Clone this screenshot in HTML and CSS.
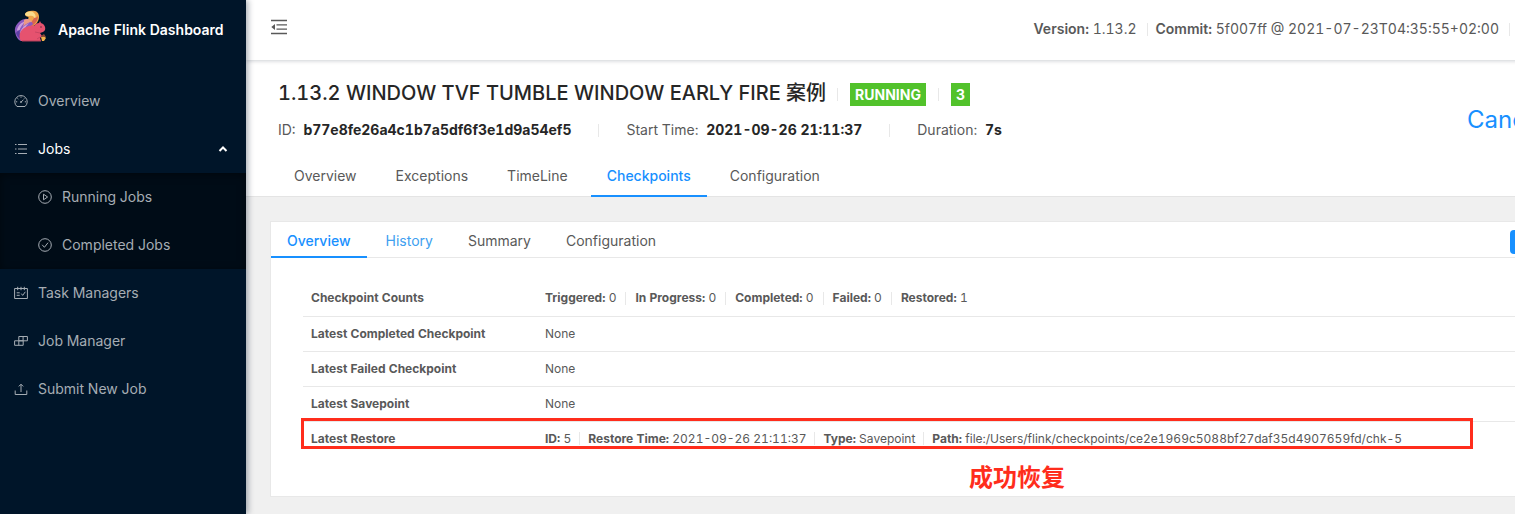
FILE: index.html
```html
<!DOCTYPE html>
<html lang="en">
<head>
<meta charset="utf-8">
<title>Apache Flink Dashboard</title>
<link rel="stylesheet" href="styles.css">
</head>
<body>
<div class="app">
  <aside class="sidebar">
    <a class="brand" href="#">
      <svg class="brand-logo" viewBox="0 0 32 32" aria-hidden="true">
        <path d="M11 4c1-3 6-4 10-3 4 1 5 6 3 10-1 3-4 4-6 6l-7-5c3-2 4-4 4-5-2 0-4-1-4-3z" fill="#f0a64a"/>
        <path d="M11 4c2-3 7-3 9-1s2 4 1 6c-1-3-3-4-6-3-2 0-4 0-4-2z" fill="#fbdc8c"/>
        <path d="M14 6c2 0 4 1 4 3l-5 3c2-2 2-4 1-6z" fill="#f0a64a"/>
        <path d="M20 8c2 0 3-1 4-2 0 4-2 7-6 10l-5-2c3-1 6-3 7-6z" fill="#d96550"/>
        <path d="M11 9C5 10 0 16 1 22c1 5 3 8 6 9l3-8 9-9c-2-3-5-6-8-5z" fill="#8b5ac0"/>
        <path d="M3 20c1-5 5-8 9-9-3 3-6 6-7 11zm3 5c0-5 3-9 9-12-4 4-6 8-6 13z" fill="#cda0dd"/>
        <path d="M10 10c3-2 7-1 8 2-3 0-7 2-9 5 1-3 1-5 1-7z" fill="#ed9a83"/>
        <path d="M2 23c1-1 2-3 4-3-1 4 1 8 3 10-4-1-6-4-7-7z" fill="#5d3fa5"/>
        <path d="M7 31c-3-5-1-10 3-13 4-2 7-3 10-2 1-2 3-3 5-3l1-2 1 2c3 1 5 4 4 7-1 2-3 2-5 3l2 3-2 2 1 3z" fill="#e6526f"/>
        <path d="M26 23l-5-1m5 5l-3 2" fill="none" stroke="#b43e5b" stroke-width=".6"/>
        <path d="M8 31h19" stroke="#b43e5b"/>
        <path d="M27 27l3-1 2 2-2 3-2 0z" fill="#f4b24b"/>
        <path d="M27 26l3-2 2 3-2 0z" fill="#8d4a38"/>
        <circle cx="27" cy="17" r=".7" fill="#4c243c"/>
      </svg>
      <span>Apache Flink Dashboard</span>
    </a>
    <nav class="menu">
      <a class="menu-item" href="#">
        <svg class="icon" viewBox="0 0 14 14"><path d="M3 12.5h8A6.2 6.2 0 1 0 3 12.5zM7 8.2l2.5-2.6M7 2.5v1.2M3.4 4.2l.9.8M2 7.8h1.2m7.6 0H12M10.6 4.2l-.5.5"/><circle cx="7" cy="8" r=".6"/></svg>
        Overview</a>
      <button class="menu-item menu-item-open" type="button" aria-expanded="true">
        <svg class="icon" viewBox="0 0 14 14"><path d="M4 2.5h9M4 7h9M4 11.5h9M1 2.5h1.5M1 7h1.5M1 11.5h1.5"/></svg>
        Jobs
        <svg class="caret" viewBox="0 0 10 10"><path d="M1.5 7L5 3.5 8.5 7"/></svg>
      </button>
      <div class="submenu">
        <a class="menu-item" href="#">
          <svg class="icon" viewBox="0 0 14 14"><circle cx="7" cy="7" r="6.3"/><path d="M5.5 4.2v5.6L9.6 7z"/></svg>
          Running Jobs</a>
        <a class="menu-item" href="#">
          <svg class="icon" viewBox="0 0 14 14"><circle cx="7" cy="7" r="6.3"/><path d="M4.2 6.8l2.2 2.5 3.6-4.6"/></svg>
          Completed Jobs</a>
      </div>
      <a class="menu-item" href="#">
        <svg class="icon" viewBox="0 0 14 14"><path d="M.6 2.5h12.8v10H.6zM3.7.8v3.4M7 .8v3.4M10.3.8v3.4M2.7 6.8h3M2.7 9.3h3M7.3 7.6l1.4 1.8 2.6-3.6"/></svg>
        Task Managers</a>
      <a class="menu-item" href="#">
        <svg class="icon" viewBox="0 0 14 14"><path d="M4.8 2.5h8.6v4.3H4.8zM.6 6.8h8.6v4.5H.6zM9.1 2.5v4.3M4.8 6.8v4.5"/></svg>
        Job Manager</a>
      <a class="menu-item" href="#">
        <svg class="icon" viewBox="0 0 14 14"><path d="M1.2 8.5v4h11.6v-4M7 10V2.5M4.8 4.4L7 2.2l2.2 2.2"/></svg>
        Submit New Job</a>
    </nav>
  </aside>

  <div class="page">
    <header class="topbar">
      <button class="fold" type="button" aria-label="Collapse menu">
        <svg viewBox="0 0 16 16"><path d="M0 1.5h16M5.5 5.8H16M5.5 10.2H16M0 14.5h16"/><path class="solid" d="M4 5v6L.3 8z"/></svg>
      </button>
      <div class="build">
        <span><strong>Version:</strong> 1.13.2</span><i class="rule"></i>
        <span><strong>Commit:</strong> 5f007ff @ 2021-07-23T04:35:55+02:00</span><i class="rule"></i>
      </div>
    </header>

    <section class="job">
      <div class="job-head">
        <div class="job-info">
          <div class="job-title">
            <h1>1.13.2 WINDOW TVF TUMBLE WINDOW EARLY FIRE 案例</h1>
            <i class="rule"></i><span class="badge">RUNNING</span><i class="rule"></i><span class="badge">3</span>
          </div>
          <div class="job-meta">
            <span>ID: <strong>b77e8fe26a4c1b7a5df6f3e1d9a54ef5</strong></span><i class="rule"></i>
            <span>Start Time: <strong>2021-09-26 21:11:37</strong></span><i class="rule"></i>
            <span>Duration: <strong>7s</strong></span>
          </div>
        </div>
        <a class="cancel" href="#">Cancel Job</a>
      </div>
      <nav class="tabs">
        <a href="#">Overview</a>
        <a href="#">Exceptions</a>
        <a href="#">TimeLine</a>
        <a class="active" href="#">Checkpoints</a>
        <a href="#">Configuration</a>
      </nav>
    </section>

    <main class="card">
      <div class="card-bar">
        <nav class="tabs tabs-small">
          <a class="active" href="#">Overview</a>
          <a class="hover" href="#">History</a>
          <a href="#">Summary</a>
          <a href="#">Configuration</a>
        </nav>
        <button class="refresh" type="button" aria-label="Refresh"></button>
      </div>
      <div class="card-body">
        <table class="facts">
          <tr><th scope="row">Checkpoint Counts</th><td><div class="values counts">
            <span><strong>Triggered:</strong> 0</span><i class="rule"></i>
            <span><strong>In Progress:</strong> 0</span><i class="rule"></i>
            <span><strong>Completed:</strong> 0</span><i class="rule"></i>
            <span><strong>Failed:</strong> 0</span><i class="rule"></i>
            <span><strong>Restored:</strong> 1</span></div></td></tr>
          <tr><th scope="row">Latest Completed Checkpoint</th><td>None</td></tr>
          <tr><th scope="row">Latest Failed Checkpoint</th><td>None</td></tr>
          <tr><th scope="row">Latest Savepoint</th><td>None</td></tr>
          <tr><th scope="row">Latest Restore</th><td><div class="values">
            <span><strong>ID:</strong> 5</span><i class="rule"></i>
            <span><strong>Restore Time:</strong> 2021-09-26 21:11:37</span><i class="rule"></i>
            <span><strong>Type:</strong> Savepoint</span><i class="rule"></i>
            <span><strong>Path:</strong> file:/Users/flink/checkpoints/ce2e1969c5088bf27daf35d4907659fd/chk-5</span></div></td></tr>
        </table>
        <div class="mark-box"></div>
        <div class="mark-note" lang="zh">成功恢复</div>
      </div>
    </main>
  </div>
</div>
</body>
</html>
```
FILE: styles.css
```css
* { box-sizing: border-box; }
body {
  margin: 0;
  overflow: hidden;
  background: #f0f0f0;
  color: #595959;
  font: 14px/22px Inter, "Noto Sans CJK SC", sans-serif;
  font-feature-settings: "tnum";
  white-space: nowrap;
}
a { color: inherit; text-decoration: none; }
button { font: inherit; color: inherit; border: 0; padding: 0; background: none; }
strong, th { font-weight: 700; }
svg { fill: none; stroke: currentColor; flex: none; }

.app { display: flex; min-height: 100vh; width: calc(100vw + 100px); }

.sidebar {
  flex: 0 0 246px;
  z-index: 2;
  background: #001529;
  color: #a6adb4;
  box-shadow: 2px 0 6px rgba(0, 21, 41, .35);
}
.brand {
  display: flex;
  align-items: center;
  gap: 12px;
  height: 60px;
  padding-left: 14px;
  color: #fff;
  font-weight: 600;
}
.brand-logo { width: 32px; height: 32px; stroke: none; margin-bottom: 8px; }
.menu { padding-top: 17px; }
.menu-item {
  display: flex;
  align-items: center;
  gap: 10px;
  width: 100%;
  height: 48px;
  padding: 0 18px 0 14px;
}
.menu-item-open { color: #fff; }
.menu-item-open .icon { color: #a6adb4; }
.submenu { background: #000c17; box-shadow: inset 0 2px 8px rgba(0, 0, 0, .45); }
.submenu .menu-item { padding-left: 38px; }
.icon { width: 14px; height: 14px; }
.caret { width: 10px; height: 10px; margin-left: auto; stroke-width: 2; }

.page { flex: 1; min-width: 0; }
.topbar {
  position: relative;
  z-index: 1;
  display: flex;
  align-items: center;
  justify-content: space-between;
  height: 60px;
  padding: 0 105px 0 25px;
  background: #fff;
  box-shadow: 0 1px 4px rgba(0, 21, 41, .2);
}
.fold { width: 16px; height: 16px; margin-bottom: 6px; }
.fold svg { display: block; width: 16px; height: 16px; stroke-width: 1.3; }
.fold .solid { fill: currentColor; stroke: none; }
.build { display: flex; align-items: center; margin-bottom: 2px; }
.build strong { font-weight: 600; }
.build .rule { margin: 0 8px 0 10px; }
.build .rule:last-child { margin-right: 0; }
.rule { flex: none; width: 1px; height: 13px; background: #e8e8e8; }

.job { background: #fff; border-bottom: 1px solid #e4e4e4; }
.job-head {
  display: flex;
  align-items: center;
  justify-content: space-between;
  padding: 17px 20px 10px 32px;
}
.job-title { display: flex; align-items: center; height: 32px; }
.job-title h1 { margin: 0; color: #262626; font-size: 20px; line-height: 32px; font-weight: 500; }
.job-title .rule { margin: 3px 12px 0; }
.job-title .rule:first-of-type { margin-left: 11px; }
.badge { margin-top: 3px; padding: 0 5px; background: #52c22b; color: #fff; font-weight: 700; line-height: 23px; }
.job-meta { display: flex; align-items: center; height: 32px; margin-top: 5px; }
.job-meta strong { margin-left: 4px; color: #262626; }
.job-meta .rule { margin: 0 27px; }
.cancel { margin-top: 16px; color: #1890ff; font-size: 24px; line-height: 32px; }

.tabs { display: flex; gap: 7px; padding-left: 32px; }
.job .tabs { margin-bottom: -1px; }
.tabs a { padding: 9px 16px 8px; border-bottom: 2px solid transparent; }
.tabs .hover { color: #40a0f0; }
.tabs .active { color: #1890ff; border-color: #1890ff; font-weight: 500; }

.card { margin: 24px 24px 17px; background: #fff; border: 1px solid #e8e8e8; }
.card-bar {
  display: flex;
  align-items: center;
  justify-content: space-between;
  border-bottom: 1px solid #e8e8e8;
}
.card-bar .tabs { gap: 3px; padding-left: 0; margin-bottom: -1px; }
.card-bar .tabs a { padding: 8px 16px 4px; }
.refresh { width: 80px; height: 24px; margin-top: 4px; border-radius: 4px; background: #1890ff; }
.card-body { position: relative; padding: 23px 32px 40px; }
.facts { width: 100%; border-collapse: collapse; font-size: 12px; line-height: 18px; }
.facts th, .facts td { height: 35px; padding: 8px; text-align: left; border-bottom: 1px solid #e8e8e8; }
.facts th { width: 234px; }
.facts tr:last-child > * { border-bottom: 0; }
.values { display: flex; align-items: center; }
.values .rule { margin: 0 8px; }
.counts .rule { margin: 0 9px; }

.mark-box {
  position: absolute;
  top: 160px;
  left: 30px;
  right: 117px;
  height: 31px;
  border: 3px solid #ff2d1c;
}
.mark-note {
  position: absolute;
  top: 201px;
  left: 698px;
  color: #ff2d1c;
  font: 700 24px/34px "Noto Sans CJK SC", sans-serif;
}
```
